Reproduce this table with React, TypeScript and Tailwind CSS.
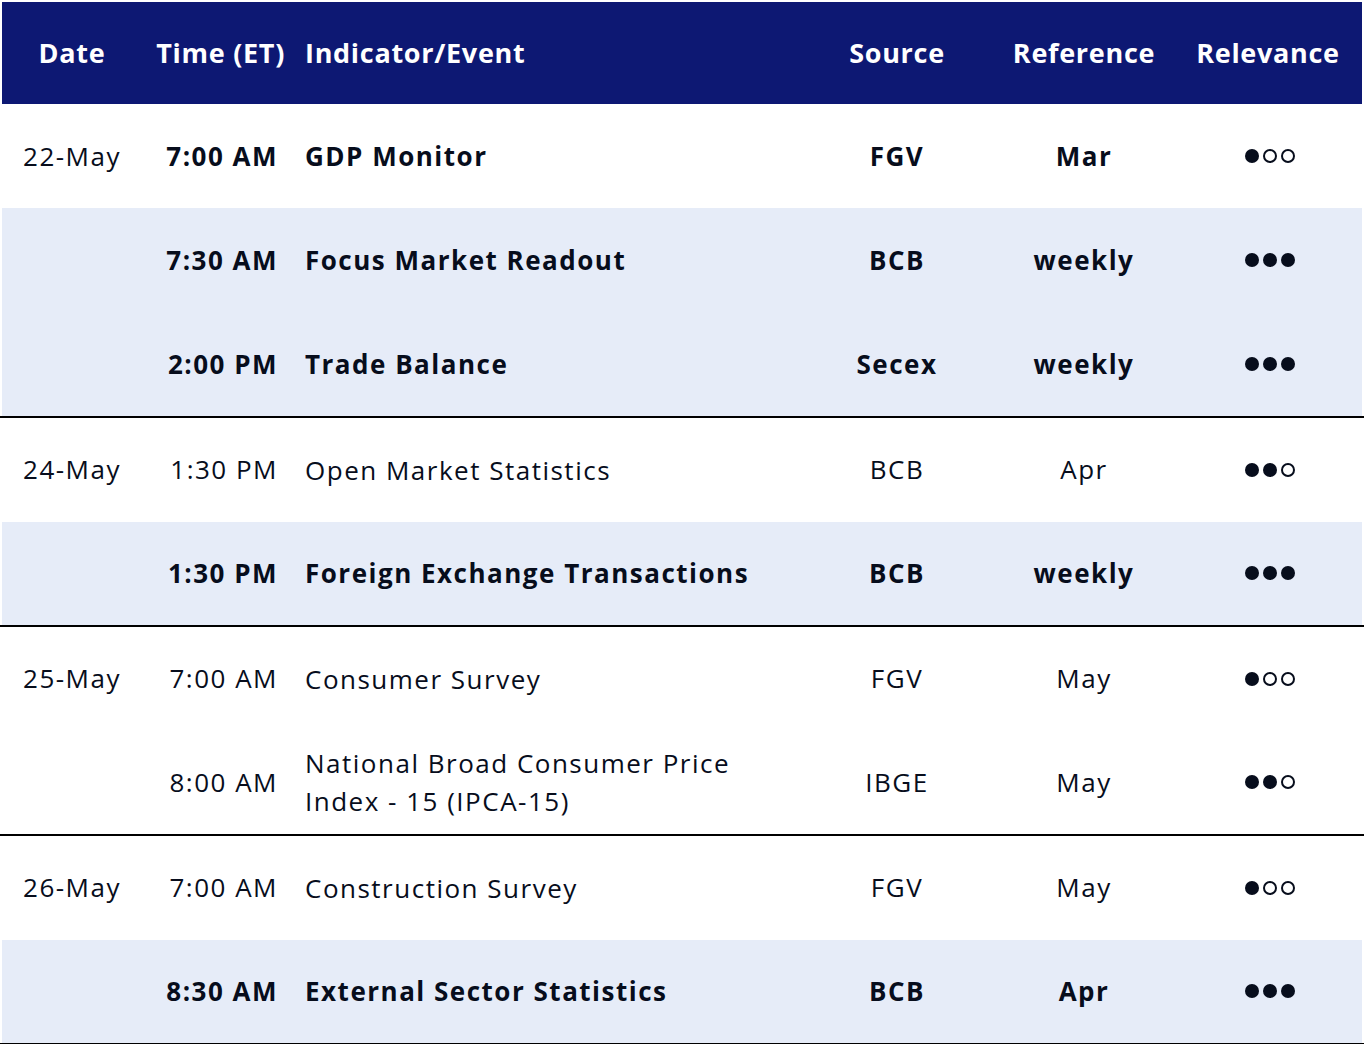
type Row = {
  date: string;
  time: string;
  event: string[];
  source: string;
  ref: string;
  level: number;
  bold: boolean;
  shaded: boolean;
};

const groups: Row[][] = [
  [
    { date: '22-May', time: '7:00 AM', event: ['GDP Monitor'], source: 'FGV', ref: 'Mar', level: 1, bold: true, shaded: false },
    { date: '', time: '7:30 AM', event: ['Focus Market Readout'], source: 'BCB', ref: 'weekly', level: 3, bold: true, shaded: true },
    { date: '', time: '2:00 PM', event: ['Trade Balance'], source: 'Secex', ref: 'weekly', level: 3, bold: true, shaded: true },
  ],
  [
    { date: '24-May', time: '1:30 PM', event: ['Open Market Statistics'], source: 'BCB', ref: 'Apr', level: 2, bold: false, shaded: false },
    { date: '', time: '1:30 PM', event: ['Foreign Exchange Transactions'], source: 'BCB', ref: 'weekly', level: 3, bold: true, shaded: true },
  ],
  [
    { date: '25-May', time: '7:00 AM', event: ['Consumer Survey'], source: 'FGV', ref: 'May', level: 1, bold: false, shaded: false },
    { date: '', time: '8:00 AM', event: ['National Broad Consumer Price', 'Index - 15 (IPCA-15)'], source: 'IBGE', ref: 'May', level: 2, bold: false, shaded: false },
  ],
  [
    { date: '26-May', time: '7:00 AM', event: ['Construction Survey'], source: 'FGV', ref: 'May', level: 1, bold: false, shaded: false },
    { date: '', time: '8:30 AM', event: ['External Sector Statistics'], source: 'BCB', ref: 'Apr', level: 3, bold: true, shaded: true },
  ],
];

const cols = 'grid grid-cols-[140px_147px_511px_194px_180px_188px]';

const Dots = ({ level }: { level: number }) => (
  <div className="flex items-center justify-center gap-[4px] pl-[4px]">
    {[0, 1, 2].map((i) =>
      i < level ? (
        <span key={i} className="block w-[14px] h-[14px] rounded-full bg-[#070d1c]" />
      ) : (
        <span key={i} className="block w-[14px] h-[14px] rounded-full border-2 border-[#070d1c]" />
      )
    )}
  </div>
);

export default function App() {
  return (
    <div className="w-[1364px] h-[1044px] bg-white overflow-hidden text-[#070d1c] font-['Open_Sans',sans-serif]">
      <div className={`${cols} mx-[2px] mt-[2px] h-[102px] bg-[#0d1873] text-white text-[27px] tracking-[0.7px] font-bold items-center`}>
        <div className="text-center">Date</div>
        <div className="text-right pr-[4px]">Time (ET)</div>
        <div className="pl-[16px]">Indicator/Event</div>
        <div className="text-center">Source</div>
        <div className="text-center">Reference</div>
        <div className="text-center">Relevance</div>
      </div>
      {groups.map((g, gi) => (
        <div key={gi} className="border-b-2 border-black">
          {g.map((r, ri) => (
            <div
              key={ri}
              className={`${cols} mx-[2px] items-center text-[26px] tracking-[1.5px] ${gi === 0 ? 'h-[104px]' : 'h-[103.5px]'} ${r.shaded ? 'bg-[#e6ecf8]' : 'bg-white'}`}
            >
              <div className="text-center">{r.date}</div>
              <div className={`text-right pr-[11px] ${r.bold ? 'font-bold' : ''}`}>{r.time}</div>
              <div className={`pl-[16px] leading-[38px] ${r.bold ? 'font-bold' : ''}`}>
                {r.event.map((l, li) => (
                  <div key={li}>{l}</div>
                ))}
              </div>
              <div className={`text-center ${r.bold ? 'font-bold' : ''}`}>{r.source}</div>
              <div className={`text-center ${r.bold ? 'font-bold' : ''}`}>{r.ref}</div>
              <Dots level={r.level} />
            </div>
          ))}
        </div>
      ))}
    </div>
  );
}
